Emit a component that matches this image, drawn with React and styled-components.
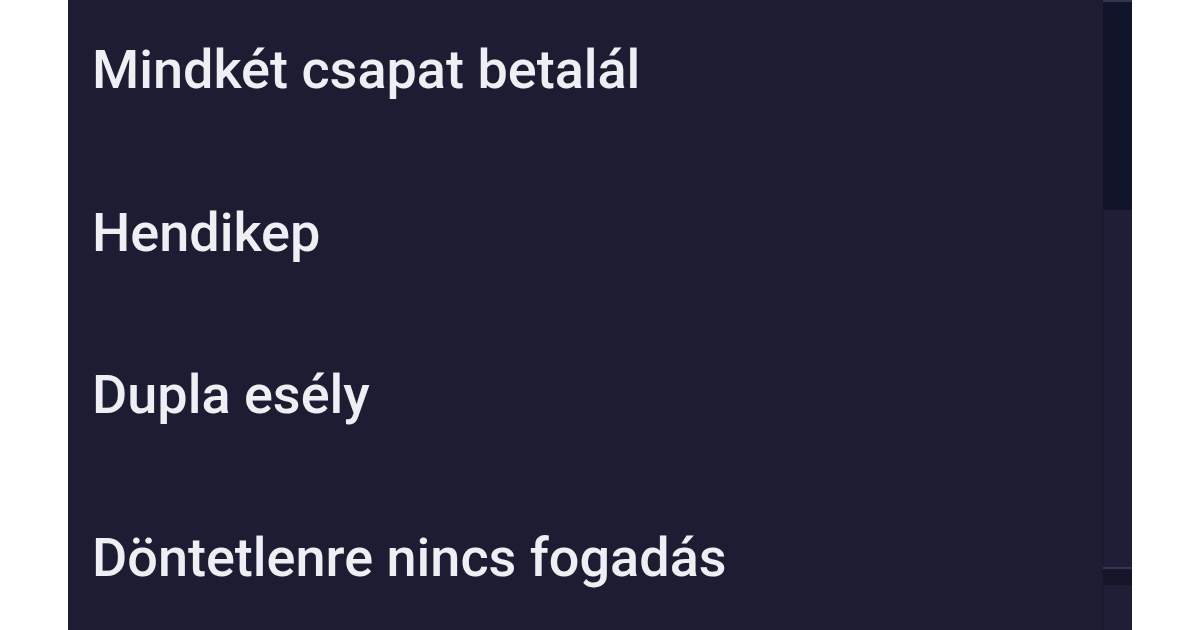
import React from "react";
import styled, { createGlobalStyle } from "styled-components";

const options = [
  "Mindkét csapat betalál",
  "Hendikep",
  "Dupla esély",
  "Döntetlenre nincs fogadás",
];

const GlobalStyle = createGlobalStyle`
  html, body {
    margin: 0;
    padding: 0;
    background: #ffffff;
  }
  body {
    font-family: Roboto, "Liberation Sans", sans-serif;
  }
`;

const App = () => {
  return (
    <Page>
      <GlobalStyle />
      <Dropdown>
        <OptionList>
          {options.map((label) => (
            <Option key={label}>{label}</Option>
          ))}
        </OptionList>
        <Scrollbar>
          <TrackEdge />
          <Thumb />
          <Track $height={357} />
          <TrackEdge />
          <Band />
          <Track $grow />
        </Scrollbar>
      </Dropdown>
    </Page>
  );
};

export default App;

const Page = styled.div`
  width: 1200px;
  height: 630px;
  display: flex;
  justify-content: center;
  overflow: hidden;
  background: #ffffff;
`;

const Dropdown = styled.div`
  width: 1064px;
  height: 630px;
  display: flex;
  background-color: #1c1d33;
`;

const OptionList = styled.ul`
  flex: 1;
  margin: 0;
  padding: 0 0 0 24px;
  list-style: none;
`;

const Option = styled.li`
  height: 162.5px;
  box-sizing: border-box;
  padding-top: 38px;
  font-size: 54px;
  line-height: 63px;
  font-weight: 500;
  color: #eeeef3;
  white-space: nowrap;
`;

const Scrollbar = styled.div`
  width: 29px;
  display: flex;
  flex-direction: column;
  background-color: #1e1f36;
  box-shadow: inset 1px 0 0 #191a2e;
`;

const TrackEdge = styled.div`
  height: 2px;
  background-color: #34354f;
`;

const Thumb = styled.div`
  height: 208px;
  background-color: #12142a;
`;

const Track = styled.div`
  flex: ${({ $grow }) => ($grow ? 1 : "none")};
  height: ${({ $height }) => ($height ? `${$height}px` : "auto")};
`;

const Band = styled.div`
  height: 16px;
  background-color: #15162a;
`;
